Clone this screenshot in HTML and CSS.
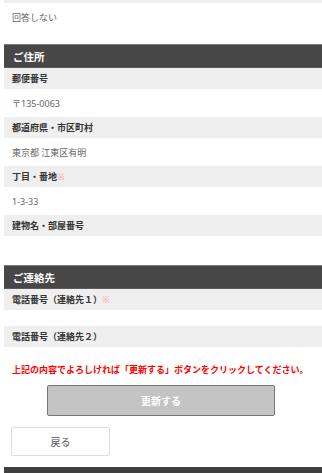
FILE: index.html
```html
<!DOCTYPE html>
<html lang="ja">
<head>
    <meta charset="UTF-8">
    <meta name="viewport" content="width=device-width, initial-scale=1.0">
    <title>登録内容の確認</title>
    <link rel="stylesheet" href="styles.css">
</head>
<body>
    <div class="container">
        <div class="form-label form-label-cut"></div>
        <div class="form-value">回答しない</div>

        <h3 class="section-title">ご住所</h3>
        <div class="form-label">郵便番号</div>
        <div class="form-value">〒135-0063</div>
        <div class="form-label">都道府県・市区町村</div>
        <div class="form-value">東京都 江東区有明</div>
        <div class="form-label">丁目・番地<span class="required">※</span></div>
        <div class="form-value">1-3-33</div>
        <div class="form-label">建物名・部屋番号</div>
        <div class="form-value form-value-empty"></div>

        <h3 class="section-title">ご連絡先</h3>
        <div class="form-label">電話番号（連絡先１）<span class="required">※</span></div>
        <div class="form-value form-value-empty"></div>
        <div class="form-label">電話番号（連絡先２）</div>

        <p class="notice">上記の内容でよろしければ「更新する」ボタンをクリックしてください。</p>
        <button type="submit" class="submit-btn" disabled>更新する</button>
        <button type="button" class="back-btn">戻る</button>

        <div class="footer-bar"></div>
    </div>
</body>
</html>
```

FILE: styles.css
```css
body {
    margin: 0;
    font-family: "Noto Sans", "Noto Sans CJK JP", sans-serif;
    background-color: white;
    color: #333;
}
.container {
    padding-left: 4px;
}
.form-label {
    height: 21px;
    display: flex;
    align-items: center;
    padding: 0 8px;
    background-color: #efefef;
    font-size: 9px;
    font-weight: bold;
    color: #333;
}
.form-label-cut {
    height: 3px;
}
.required {
    color: #f7a0a0;
    font-weight: normal;
}
.form-value {
    height: 28px;
    display: flex;
    align-items: center;
    padding: 0 8px;
    font-size: 9px;
    color: #666;
}
.form-value-empty {
    height: 16px;
}
.section-title {
    margin: 13px 0 0;
    height: 22px;
    display: flex;
    align-items: center;
    padding: 0 9px;
    background-color: #474747;
    border-top: 1px solid #7a7a7a;
    border-bottom: 1px solid #5c5c5c;
    color: white;
    font-size: 10.5px;
    font-weight: bold;
}
.notice {
    margin: 16px 0 0 8px;
    line-height: 14px;
    font-size: 9px;
    font-weight: bold;
    color: #f00;
    white-space: nowrap;
}
.submit-btn {
    display: block;
    width: 228px;
    height: 31px;
    margin: 8px 0 0 43px;
    background-color: #c4c4c4;
    border: 1.5px solid #777;
    border-radius: 2px;
    color: white;
    font-family: inherit;
    font-size: 10px;
    font-weight: bold;
}
.back-btn {
    display: block;
    width: 99px;
    height: 29px;
    margin: 11px 0 0 7px;
    background-color: white;
    border: 1px solid #ddd;
    border-radius: 2px;
    color: #555;
    font-family: inherit;
    font-size: 10px;
    cursor: pointer;
}
.footer-bar {
    height: 10px;
    margin-top: 11px;
    background-color: #3f3f3f;
}
```
